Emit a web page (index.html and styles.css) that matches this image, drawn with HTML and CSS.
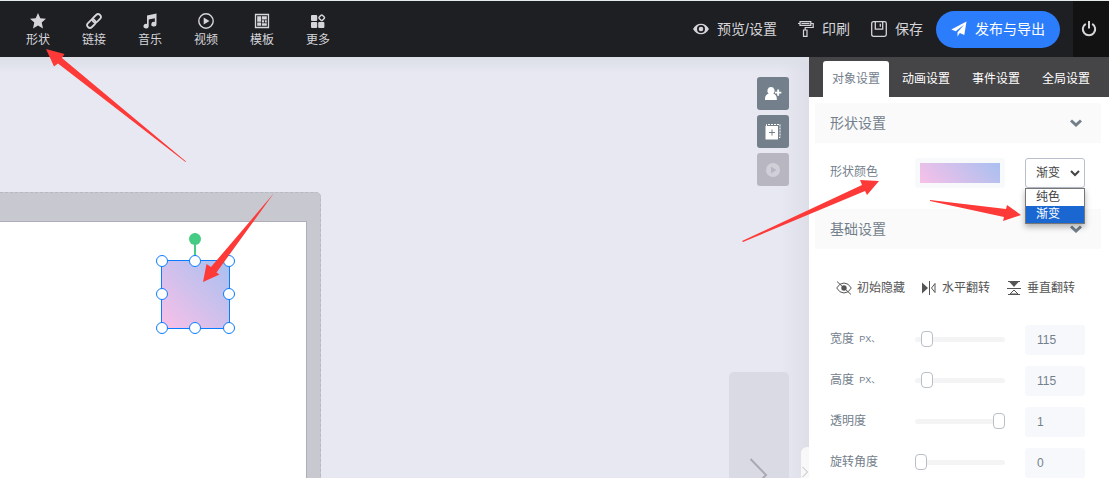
FILE: index.html
```html
<!DOCTYPE html>
<html lang="zh-CN">
<head>
  <meta charset="UTF-8" />
  <meta name="viewport" content="width=device-width, initial-scale=1.0"/>
  <title>形状设置</title>
  <link rel="stylesheet" href="styles.css">
</head>
<body>
  <header class="topbar">
    <nav class="tools">
      <button class="tool" type="button">
        <svg viewBox="0 0 16 16"><path fill="currentColor" d="M8 0l2.300 5.200 5.700.6-4.300 3.800L13 15.500 8 12.500 3 15.500l1.300-5.900L0 5.800l5.700-.6z"/></svg>
        形状
      </button>
      <button class="tool" type="button">
        <svg viewBox="0 0 16 16"><g transform="rotate(-45 8 8)" fill="none" stroke="currentColor" stroke-width="1.800"><rect x="-.5" y="5.200" width="9.500" height="5.600" rx="2.800"/><rect x="7" y="5.200" width="9.500" height="5.600" rx="2.800"/></g></svg>
        链接
      </button>
      <button class="tool" type="button">
        <svg viewBox="0 0 16 16"><path fill="currentColor" d="M5 2.500L14.500.5v10.700a2.600 2.300 0 1 1-1.700-2.100V5.300L6.700 6.600v6.600A2.600 2.300 0 1 1 5 11z"/></svg>
        音乐
      </button>
      <button class="tool" type="button">
        <svg viewBox="0 0 16 16"><circle cx="8" cy="8" r="7.200" fill="none" stroke="currentColor" stroke-width="1.400"/><path fill="currentColor" d="M5.700 4.500L11.500 8l-5.800 3.500z"/></svg>
        视频
      </button>
      <button class="tool" type="button">
        <svg viewBox="0 0 16 16"><path fill="none" stroke="currentColor" stroke-width="1.300" d="M1.500 1.500h13v13h-13z"/><path fill="currentColor" d="M3.200 3.200h4v5.600h-4zM8 3.200h4.800v3.300H8zM8 7.300h2.200v2.200H8zM11 7.300h1.800v2.200H11zM3.200 9.600h4v3.200h-4zM8 10.300h4.800v2.500H8z"/></svg>
        模板
      </button>
      <button class="tool" type="button">
        <svg viewBox="0 0 16 16"><g fill="currentColor"><rect x="1" y="2" width="6.200" height="6" rx="1"/><rect x="1" y="9" width="6.200" height="6" rx="1"/><rect x="8.200" y="9" width="6.200" height="6" rx="1"/></g><rect x="9.500" y="2.500" width="4.500" height="4.500" rx="1" transform="rotate(45 11.750 4.750)" fill="none" stroke="currentColor" stroke-width="1.500"/></svg>
        更多
      </button>
    </nav>

    <div class="actions">
      <button class="action" type="button">
        <svg viewBox="0 0 16 16"><path fill="currentColor" fill-rule="evenodd" d="M0 8c2-3.500 4.800-5.300 8-5.300S14 4.500 16 8c-2 3.500-4.800 5.300-8 5.300S2 11.500 0 8zm8-4a4 4 0 1 0 0 8 4 4 0 0 0 0-8zm0 1.700a2.300 2.300 0 1 1 0 4.600 2.300 2.300 0 0 1 0-4.600z"/></svg>
        预览/设置
      </button>
      <button class="action" type="button">
        <svg viewBox="0 0 16 16"><path fill="none" stroke="currentColor" stroke-width="1.200" d="M2 .6h10.800v3.800H2zM2 2.500H0M12.800 2.500h2.400v4H7.200V9M5.500 9H9v6.400H5.500zM3.500 2.500h8"/></svg>
        印刷
      </button>
      <button class="action" type="button">
        <svg viewBox="0 0 16 16"><path fill="none" stroke="currentColor" stroke-width="1.300" d="M2.500.7h11q1.800 0 1.800 1.800v11q0 1.800-1.800 1.800h-11Q.7 15.300.7 13.500v-11Q.7.7 2.500.7zM4.300.7v7.500h7.400V.7M9.300 2.800v3"/></svg>
        保存
      </button>
      <button class="publish" type="button">
        <svg viewBox="0 0 16 16"><path fill="currentColor" d="M15.500.5L13.300 14 8.800 12 6.500 15.500V11.200L13.300 3.500 4.700 10.300.3 8.500z"/></svg>
        发布与导出
      </button>
    </div>
    <button class="power" type="button" aria-label="退出">
      <svg viewBox="0 0 16 16" fill="none" stroke="currentColor" stroke-width="2"><path d="M4.800 2.800a6.200 6.200 0 1 0 6.400 0M8 0v7.500"/></svg>
    </button>
  </header>

  <main class="workspace">
    <section class="canvas">
      <div class="stage">
        <div class="sheet"></div>
      </div>

      <!-- selected shape with its handles -->
      <div class="shape">
        <span class="rotate"></span>
        <i class="handle nw"></i><i class="handle n"></i><i class="handle ne"></i>
        <i class="handle w"></i><i class="handle e"></i>
        <i class="handle sw"></i><i class="handle s"></i><i class="handle se"></i>
      </div>

      <div class="side-tools">
        <button type="button" aria-label="添加成员">
          <svg viewBox="0 0 18 16"><path fill="currentColor" d="M7 1a3.600 3.600 0 0 1 2.300 6.400c1.900.7 3.500 2.400 3.500 4.800V14H1v-1.800c0-2.400 1.700-4.100 3.700-4.800A3.600 3.600 0 0 1 7 1zM13.200 3.500h1.900v2.200h2.200v1.900h-2.200v2.200h-1.900V7.600H11V5.700h2.200z"/></svg>
        </button>
        <button type="button" aria-label="添加页面">
          <svg viewBox="0 0 18 16"><path fill="none" stroke="currentColor" stroke-dasharray="2 1" d="M2.500 2V.5h13.500v13h-1.500"/><path fill="currentColor" d="M1.500 2h12.500v13.500H1.500z"/><path stroke="#73808c" d="M5 8.500h6M8 5.500v6"/></svg>
        </button>
        <button type="button" aria-label="播放" disabled>
          <svg viewBox="0 0 18 16"><circle cx="9" cy="8" r="7" fill="currentColor"/><path fill="#b8b7c1" d="M7 4.500L12.500 8 7 11.500z"/></svg>
        </button>
      </div>

      <button class="next-page" type="button" aria-label="下一页">
        <svg viewBox="0 0 20 34"><path fill="none" stroke="currentColor" stroke-width="2" d="M1.500 1L17 17 1.500 33"/></svg>
      </button>
      <button class="collapse" type="button" aria-label="收起">
        <svg viewBox="0 0 8 12"><path fill="none" stroke="currentColor" d="M1.500 1L6.500 6l-5 5"/></svg>
      </button>
    </section>

    <aside class="sidebar">
      <nav class="tabs">
        <button class="tab active" type="button">对象设置</button>
        <button class="tab" type="button">动画设置</button>
        <button class="tab" type="button">事件设置</button>
        <button class="tab" type="button">全局设置</button>
      </nav>

      <div class="panel">
        <h2 class="group-title">
          形状设置
          <svg viewBox="0 0 12 8"><path d="M1 1.500l5 4.500 5-4.500"/></svg>
        </h2>
        <div class="row color-row">
          <label for="fill">形状颜色</label>
          <button class="swatch" type="button" aria-label="颜色"></button>
          <div class="fill">
            <select id="fill">
              <option>纯色</option>
              <option selected>渐变</option>
            </select>
            <svg viewBox="0 0 12 8"><path d="M2 2l4 4 4-4"/></svg>
            <ul class="menu">
              <li>纯色</li>
              <li class="selected">渐变</li>
            </ul>
          </div>
        </div>

        <h2 class="group-title">
          基础设置
          <svg viewBox="0 0 12 8"><path d="M1 1.500l5 4.500 5-4.500"/></svg>
        </h2>
        <div class="flips">
          <button type="button">
            <svg viewBox="0 0 16 14"><path fill="none" stroke="currentColor" d="M.7 7Q3.500 2 8 2t7.300 5Q12.500 12 8 12T.7 7zM1 .5l14 13"/><circle cx="8" cy="7" r="2.700" fill="currentColor"/></svg>
            初始隐藏
          </button>
          <button type="button">
            <svg viewBox="0 0 16 14"><path fill="currentColor" d="M1 1.500L7 7l-6 5.500z"/><path fill="none" stroke="currentColor" d="M8.500 0v14M14 2.500v9L10.500 7z"/></svg>
            水平翻转
          </button>
          <button type="button">
            <svg viewBox="0 0 16 14"><path fill="currentColor" d="M3 .5h10L8 6z"/><path fill="none" stroke="currentColor" d="M2 .5h12M1 7.500h14M8 9l4 4H4zM2 13.500h12"/></svg>
            垂直翻转
          </button>
        </div>

        <div class="row">
          <label for="width">宽度 <small>PX、</small></label>
          <input type="range" min="0" max="1500" value="115" aria-label="宽度">
          <input type="text" id="width" value="115">
        </div>
        <div class="row">
          <label for="height">高度 <small>PX、</small></label>
          <input type="range" min="0" max="1500" value="115" aria-label="高度">
          <input type="text" id="height" value="115">
        </div>
        <div class="row">
          <label for="opacity">透明度</label>
          <input type="range" min="0" max="1" step="0.1" value="1" aria-label="透明度">
          <input type="text" id="opacity" value="1">
        </div>
        <div class="row">
          <label for="angle">旋转角度</label>
          <input type="range" min="0" max="360" value="0" aria-label="旋转角度">
          <input type="text" id="angle" value="0">
        </div>
      </div>
    </aside>
  </main>

  <!-- guide arrows -->
  <svg class="arrows" width="1109" height="478" viewBox="0 0 1109 478">
    <path d="M46 49L64.500 54 62 58 186 161.500 185.500 162 58 63.500 54 66.500z"/>
    <path d="M203 282L206.500 264 211 267 274 193 216.500 272.500 219.500 274.500z"/>
    <path d="M879 181L867 195 865 191 743 242 742 241 862 185 860 180z"/>
    <path d="M1021 215L1003 221 1004 217 930 201V200L1006 209 1007 205z"/>
  </svg>
</body>
</html>
```

FILE: styles.css
```css
* {
  box-sizing: border-box;
}
body {
  display: flex;
  flex-direction: column;
  height: 100vh;
  margin: 0;
  overflow: hidden;
  font-family: "Liberation Sans", "Noto Sans CJK SC", sans-serif;
  font-size: 12px;
  line-height: 16px;
  color: #73808c;
}
button, input, select {
  font: inherit;
  color: inherit;
}
button {
  padding: 0;
  border: none;
  background: none;
  cursor: pointer;
}
svg {
  display: block;
  flex: none;
}

/* top bar */
.topbar {
  display: flex;
  flex: none;
  height: 57px;
  border-top: 1px solid #e3eceb;
  background-color: #1e1f23;
  color: #d5d5da;
}
.tools {
  display: flex;
  padding-left: 10px;
}
.tool {
  display: flex;
  flex-direction: column;
  align-items: center;
  justify-content: center;
  gap: 3px;
  width: 56px;
  padding-top: 3px;
}
.tool svg, .action svg, .publish svg, .power svg {
  width: 16px;
  height: 16px;
}
.actions {
  display: flex;
  align-items: center;
  gap: 21px;
  margin-left: auto;
  font-size: 14px;
}
.action, .publish {
  display: flex;
  align-items: center;
  gap: 8px;
}
.publish {
  height: 37px;
  margin: 0 13px 0 -8px;
  padding: 0 15px;
  border-radius: 19px;
  background-color: #2c7dfc;
  color: white;
}
.power {
  display: flex;
  align-items: center;
  width: 36px;
  padding: 0 8px;
  background-color: #121212;
}

/* canvas */
.workspace {
  display: flex;
  flex: 1;
  min-height: 0;
}
.canvas {
  position: relative;
  flex: 1;
  overflow: hidden;
  background-color: #e7e8f1;
  background-image:
    linear-gradient(to bottom, #dcdfe8, rgba(220, 223, 232, 0) 16px),
    linear-gradient(to left, #dddee8, rgba(221, 222, 232, 0) 28px);
}
.stage {
  position: absolute;
  top: 135px;
  bottom: 0;
  left: 0;
  width: 321px;
  padding: 28px 13px 0 0;
  border-top: 1px dashed #b8b8c1;
  border-right: 1px dashed #b8b8c1;
  border-top-right-radius: 5px;
  background-color: #c8c8d1;
}
.sheet {
  height: 100%;
  border-top: 1px solid #aeaeb8;
  border-right: 1px solid #aeaeb8;
  background-color: white;
}
.shape {
  position: absolute;
  top: 203px;
  left: 161px;
  width: 69px;
  height: 69px;
  border: 1px solid #0a7cff;
  background-image: linear-gradient(45deg, #f8c0e8, #a8c0f0);
}
.handle {
  position: absolute;
  width: 12px;
  height: 12px;
  margin: -6px;
  border: 1px solid #0a7cff;
  border-radius: 50%;
  background-color: white;
}
.nw, .n, .ne { top: 0; }
.w, .e { top: 49%; }
.sw, .s, .se { top: 100%; }
.nw, .w, .sw { left: 0; }
.n, .s { left: 49%; }
.ne, .e, .se { left: 100%; }
.rotate {
  position: absolute;
  top: -28px;
  left: 49%;
  width: 2px;
  height: 24px;
  margin-left: -1px;
  background-color: #46cb84;
}
.rotate::before {
  content: "";
  position: absolute;
  left: -5px;
  width: 12px;
  height: 12px;
  border-radius: 50%;
  background-color: #46cb84;
}
.side-tools {
  position: absolute;
  top: 20px;
  right: 20px;
  display: grid;
  gap: 5px;
}
.side-tools button {
  display: grid;
  place-items: center;
  width: 32px;
  height: 33px;
  border-radius: 3px;
  background-color: #73808c;
  color: white;
}
.side-tools button:disabled {
  background-color: #b8b7c1;
  color: #d0d0d8;
}
.side-tools svg {
  width: 18px;
  height: 16px;
}
.next-page {
  position: absolute;
  top: 315px;
  right: 20px;
  display: grid;
  place-items: center;
  width: 60px;
  height: 206px;
  border-radius: 5px;
  background-color: #d9dae3;
  color: #aaa9b3;
}
.next-page svg {
  width: 20px;
  height: 34px;
}
.collapse {
  position: absolute;
  top: 390px;
  right: 0;
  display: grid;
  place-items: center;
  width: 8px;
  height: 50px;
  border-radius: 6px 0 0 6px;
  background-color: #f8f8f9;
  color: #bbb;
}
.collapse svg {
  width: 8px;
  height: 12px;
}

/* sidebar */
.sidebar {
  flex: none;
  width: 300px;
  background-color: white;
}
.tabs {
  display: flex;
  gap: 4px;
  height: 40px;
  padding: 4px 0 0 14px;
  background-color: #454446;
}
.tab {
  width: 66px;
  border-radius: 3px 3px 0 0;
  color: white;
}
.tab.active {
  background-color: white;
  color: #73808c;
}
.panel {
  padding: 6px 8px 0 6px;
}
.group-title {
  display: flex;
  align-items: center;
  justify-content: space-between;
  height: 40px;
  margin: 0;
  padding: 0 19px 0 15px;
  background-color: #fafafa;
  font-size: 14px;
  font-weight: normal;
}
.group-title svg, .fill svg {
  width: 12px;
  height: 8px;
  fill: none;
  stroke: currentColor;
  stroke-width: 2;
}
.group-title svg {
  stroke-width: 3;
}
.row {
  display: grid;
  grid-template-columns: 65px 90px 60px;
  column-gap: 20px;
  align-items: center;
  height: 30px;
  margin-bottom: 11px;
  padding-left: 15px;
}
.row label {
  padding-bottom: 2px;
  white-space: nowrap;
}
.row small {
  margin-left: 2px;
  font-size: 9px;
  vertical-align: 1px;
}
.color-row {
  margin: 15px 0 21px;
}
.swatch {
  height: 30px;
  border: 5px solid #f8f9fb;
  border-radius: 3px;
  background: linear-gradient(45deg, #f8c0e8, #a8c0f0) padding-box;
}
.fill {
  position: relative;
  color: #444;
}
.fill select {
  width: 100%;
  height: 30px;
  padding: 0 10px;
  border: 1px solid #b9bfcc;
  border-radius: 3px;
  background-color: white;
  appearance: none;
}
.fill svg {
  position: absolute;
  top: 11px;
  right: 4px;
}
.menu {
  position: absolute;
  top: 30px;
  left: 0;
  width: 100%;
  margin: 0;
  padding: 0;
  border: 1px solid #767676;
  background-color: white;
  box-shadow: 0 3px 6px rgba(0, 0, 0, 0.3);
  line-height: 17px;
  list-style: none;
}
.menu li {
  padding-left: 10px;
}
.menu .selected {
  background-color: #1a67d2;
  color: white;
}
.flips {
  display: flex;
  gap: 16px;
  margin: 31px 0 29px 21px;
  color: #555;
}
.flips button {
  display: flex;
  align-items: center;
  gap: 5px;
}
.flips svg {
  width: 16px;
  height: 14px;
}
.row input[type="text"] {
  width: 60px;
  height: 30px;
  padding: 0 12px;
  border: none;
  border-radius: 3px;
  background-color: #f7f8fb;
}
.row input[type="range"] {
  width: 90px;
  height: 16px;
  margin: 0 0 2px;
  background: none;
  appearance: none;
}
input[type="range"]::-webkit-slider-runnable-track {
  height: 5px;
  border-radius: 3px;
  background-color: #f4f4f5;
}
input[type="range"]::-webkit-slider-thumb {
  width: 12px;
  height: 16px;
  margin-top: -6px;
  border: 1px solid #b9bfc6;
  border-radius: 4px;
  background-color: white;
  appearance: none;
}

/* guide arrows lie over everything */
.arrows {
  position: absolute;
  top: 0;
  left: 0;
  fill: #fd3a38;
  pointer-events: none;
}
```
